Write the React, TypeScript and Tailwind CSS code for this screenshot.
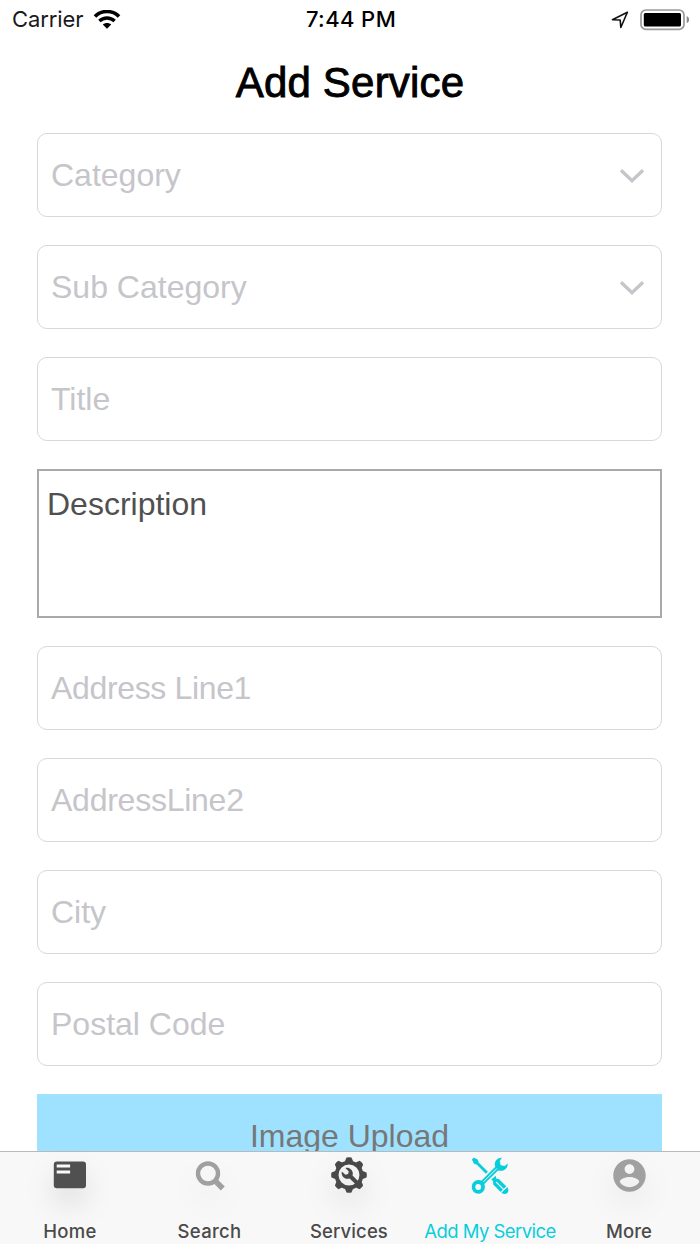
import React from 'react';

interface FieldProps {
  label: string;
  select?: boolean;
  spacing?: string;
}

interface TabItem {
  id: string;
  label: string;
  icon: React.ReactNode;
  style: string;
  shadow: string;
}

const WifiIcon = () => (
  <svg width="28" height="20" viewBox="0 0 28 20" fill="none" stroke="#000">
    <path d="M2 6.4C8.4-.1 19.6-.1 26 6.4" strokeWidth="3.6" />
    <path d="M6.4 11c4.2-4.1 11-4.1 15.2 0" strokeWidth="3.4" />
    <path d="M14 18.8l-4.2-4.2c2.4-2 6-2 8.4 0z" fill="#000" stroke="none" />
  </svg>
);

const LocationIcon = () => (
  <svg width="18" height="18" viewBox="0 0 18 18" fill="none" stroke="#111" strokeWidth="1.6" strokeLinejoin="round">
    <path d="M16.4 1.2 1.4 8.7l7.8.3.6 7.5z" />
  </svg>
);

const BatteryIcon = () => (
  <svg width="50" height="22" viewBox="0 0 50 22">
    <rect x="1" y="1" width="43" height="19.4" rx="5" fill="none" stroke="#9a9a9a" strokeWidth="1.7" />
    <rect x="3.8" y="4" width="37.2" height="13.6" rx="1.5" fill="#000" />
    <path d="M46.7 7v7.2c3.2-1.3 3.2-5.9 0-7.2z" fill="#8a8a8a" />
  </svg>
);

const ChevronIcon = () => (
  <svg className="mt-[3px]" width="26" height="16" viewBox="0 0 26 16" fill="none" stroke="#c5c5ca" strokeWidth="3.3">
    <path d="M2 2.2 13 12.8 24 2.2" />
  </svg>
);

const HomeIcon = () => (
  <svg width="34" height="38" viewBox="0 0 34 38">
    <rect x="0.8" y="5.6" width="32.2" height="26.6" rx="3" fill="#505050" />
    <path d="M3.7 8.6h13.4v3H3.7zM3.7 14.4h13.4v3H3.7z" fill="#f8f8f8" />
  </svg>
);

const SearchIcon = () => (
  <svg width="32" height="38" viewBox="0 0 32 38" fill="none" stroke="#a0a0a0">
    <circle cx="14" cy="17.5" r="10" strokeWidth="4.4" />
    <path d="m20.4 24 8.4 8.4" strokeWidth="5.6" />
  </svg>
);

const teeth = [0, 45, 90, 135, 180, 225, 270, 315];

const ServicesIcon = () => (
  <svg className="mr-0.5" width="38" height="38" viewBox="-19 -19 38 38">
    <circle r="12.4" fill="none" stroke="#494949" strokeWidth="3.9" />
    {teeth.map(angle => (
      <path key={angle} d="M-4.3-13.2-2.5-17.5Q0-18.1 2.5-17.5L4.3-13.2z" fill="#494949" transform={`rotate(${angle})`} />
    ))}
    <path
      d="M-7.2-3.6-3.6-.3-.9-1-.2-3.6-3.6-7.1C-.2-8.2 3.8-5.6 3.8-1.5 3.8-.8 3.7-.2 3.5.5L11.8 8.7 8.9 11.6.6 3.4C-4.1 4.9-8.2 1-7.2-3.6z"
      fill="#494949"
    />
  </svg>
);

const ToolsIcon = () => (
  <svg className="mt-0.5 mr-px" width="38" height="38" viewBox="0 0 38 38">
    {/* Screwdriver */}
    <path d="M.9 2.6 2.9.6 6.9 2.8 7.6 5.5 16.9 14.7 14.9 16.7 5.6 7.5 3 6.7z" fill="#08cedc" />
    <path d="m20.2 22.6 4.6-3.9.3 2.9 2.7.4 8.5 8.3c3.4 4-1.5 9-5.6 5.6l-8.5-8.5-.1-3.5z" fill="#08cedc" />
    <path d="m25.1 25 7.7 7.6M29.2 36.2l6.8-6.7" stroke="#f8f8f8" strokeWidth="1.1" />
    {/* Wrench */}
    <path
      d="M30.8.8c-5.3-.3-8.3 4.8-6.5 9L10.6 23.6C5.4 21.4.7 25.1.8 30c.1 7.3 9.6 9.2 12.5 2.8.9-2 .7-3.9 0-5.8L27 13.4c4.5 1.6 9.9-1.2 9.8-6.9L33.7 9l-4-.8-.9-4.1z"
      fill="#08cedc"
    />
    <circle cx="7.2" cy="30" r="2.9" fill="#f8f8f8" />
    <path d="M12.5 24.8 25.8 11.5" stroke="#f8f8f8" strokeWidth="1" />
  </svg>
);

const MoreIcon = () => (
  <svg className="mr-0.5" width="39" height="39" viewBox="0 0 24 24" fill="#a0a0a0">
    <path d="M12 2C6.48 2 2 6.48 2 12s4.48 10 10 10 10-4.48 10-10S17.52 2 12 2zm0 3c1.66 0 3 1.34 3 3s-1.34 3-3 3-3-1.34-3-3 1.34-3 3-3zm0 14.2c-2.5 0-4.71-1.28-6-3.22.03-1.99 4-3.08 6-3.08 1.99 0 5.97 1.09 6 3.08-1.29 1.94-3.5 3.22-6 3.22z" />
  </svg>
);

const tabs: TabItem[] = [
  { id: 'home', label: 'Home', icon: <HomeIcon />, style: 'text-[#4a4a4a] tracking-[0.3px]', shadow: 'drop-shadow-[0_14px_14px_rgba(0,0,0,0.11)]' },
  { id: 'search', label: 'Search', icon: <SearchIcon />, style: 'text-[#4a4a4a] tracking-[0.3px] pr-px', shadow: 'drop-shadow-[0_14px_14px_rgba(0,0,0,0.06)]' },
  { id: 'services', label: 'Services', icon: <ServicesIcon />, style: 'text-[#4a4a4a] tracking-[0.1px] pr-0.5', shadow: 'drop-shadow-[0_14px_14px_rgba(0,0,0,0.11)]' },
  { id: 'add', label: 'Add My Service', icon: <ToolsIcon />, style: 'text-[#08cedc] tracking-[-0.55px]', shadow: '' },
  { id: 'more', label: 'More', icon: <MoreIcon />, style: 'text-[#4a4a4a] tracking-[0.1px] pr-0.5', shadow: 'drop-shadow-[0_14px_14px_rgba(0,0,0,0.08)]' },
];

const Field: React.FC<FieldProps> = ({ label, select = false, spacing = '' }) => (
  <div className="flex h-[84px] shrink-0 items-center justify-between rounded-[10px] border-[1.5px] border-[#d8d8d8] pr-4 pb-px pl-[13px] text-[#c5c5ca]">
    <span className={`text-[32px] leading-none ${spacing}`}>{label}</span>
    {select && <ChevronIcon />}
  </div>
);

const StatusBar = () => (
  <div className="grid h-10 shrink-0 grid-cols-3 items-center pr-2.5 pb-px pl-3 font-[Inter,sans-serif] text-[22px] text-black">
    <div className="flex items-center gap-2.5">
      <span className="tracking-[-0.1px] text-[#1a1a1a]">Carrier</span>
      <WifiIcon />
    </div>
    <span className="text-center font-medium tracking-[0.4px]">7:44 PM</span>
    <div className="flex items-center justify-end gap-[11px]">
      <LocationIcon />
      <BatteryIcon />
    </div>
  </div>
);

const TabBar = () => (
  <nav className="grid h-[93px] shrink-0 grid-cols-5 border-t-[1.5px] border-[#b9b9b9] bg-[#f8f8f8] font-[Inter,sans-serif]">
    {tabs.map(tab => (
      <button key={tab.id} className="flex flex-col items-center">
        <div className={`flex h-[46px] items-center justify-center ${tab.shadow}`}>{tab.icon}</div>
        <span className={`mt-[21px] text-[18.5px] leading-6 whitespace-nowrap ${tab.id === 'add' ? 'font-normal' : 'font-medium'} ${tab.style}`}>
          {tab.label}
        </span>
      </button>
    ))}
  </nav>
);

export default function App() {
  return (
    <div className="flex h-[1244px] w-[700px] flex-col overflow-hidden bg-white font-['Liberation_Sans',Arial,sans-serif]">
      <StatusBar />
      <h1 className="h-[94px] shrink-0 pt-[19px] text-center text-[42px] leading-[48px] tracking-[0.2px] text-black [-webkit-text-stroke:0.9px_black]">
        Add Service
      </h1>
      <main className="-mt-px flex min-h-0 flex-1 flex-col gap-7 overflow-hidden pr-[38px] pl-[37px]">
        <Field label="Category" select />
        <Field label="Sub Category" select />
        <Field label="Title" />
        <div className="h-[149px] shrink-0 border-2 border-[#a9a9a9] px-2 pt-[15px] text-[32px] leading-9 text-[#505050]">
          Description
        </div>
        <Field label="Address Line1" spacing="tracking-[-0.35px]" />
        <Field label="AddressLine2" spacing="tracking-[-0.25px]" />
        <Field label="City" />
        <Field label="Postal Code" />
        <button className="h-[84px] shrink-0 bg-[#9fe2ff] text-[32px] leading-none text-[#777]">Image Upload</button>
      </main>
      <TabBar />
    </div>
  );
}
